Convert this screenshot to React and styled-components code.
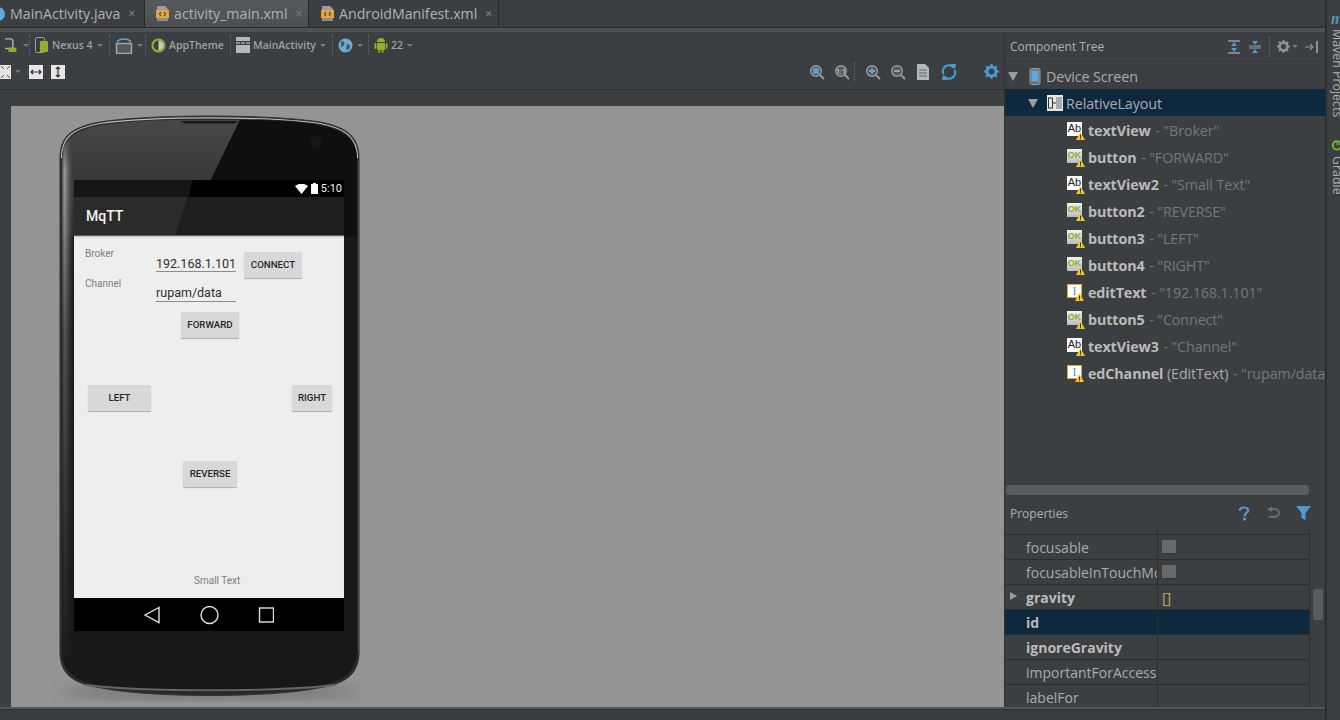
import React from 'react';
import styled, { createGlobalStyle } from 'styled-components';

const Global = createGlobalStyle`
  html, body { margin: 0; padding: 0; background: #3c3f41; }
  * { box-sizing: border-box; }
`;

const ui = `"Open Sans", "Noto Sans", "Liberation Sans", sans-serif`;

const Root = styled.div`
  width: 1340px; height: 720px; overflow: hidden; display: flex;
  background: #3c3f41; font-family: ${ui}; color: #bbbbbb;
`;
const Workspace = styled.div`
  width: 1325px; height: 720px; display: flex; flex-direction: column;
`;
const TabBar = styled.div`
  height: 28px; flex: none; display: flex; background: #3c3f41; border-bottom: 1px solid #2b2d2e;
`;
const Tab = styled.div`
  height: 27px; display: flex; align-items: center; width: ${p => p.$w}px;
  padding-left: ${p => p.$pad}px; gap: 4px; font-size: 14.2px;
  background: ${p => p.$active ? 'linear-gradient(#565a5c, #4b4f51)' : '#3c3f41'};
  border-right: 1px solid #26282a; color: #afb1b3;
  white-space: nowrap;
`;
const TabClose = styled.span`
  margin-left: 4px; font-size: 12px; color: #6f7274; font-weight: 700; line-height: 1;
`;
const Strip = styled.div`
  height: 4px; flex: none; background: #4e5254;
`;
const Panes = styled.div`
  height: 675px; flex: none; display: flex;
`;
const Designer = styled.div`
  width: 1004px; flex: none; display: flex; flex-direction: column;
`;
const Tools = styled.div`
  height: 26px; flex: none; display: flex; align-items: center; color: #9ea2a4; font-size: 10.5px;
  font-weight: 600;
`;
const ToolsBottom = styled(Tools)`
  height: 32px; padding-bottom: 4px; border-bottom: 1px solid #2f3133;
  justify-content: space-between;
`;
const Group = styled.div`
  width: ${p => p.$w}px; height: 20px; flex: none; display: flex; align-items: center; gap: 3px;
  padding-left: ${p => p.$pad || 5}px;
  border-right: 1px dotted ${p => p.$sep === false ? 'transparent' : '#6a6d6f'};
`;
const IconRow = styled.div`
  display: flex; align-items: center; gap: ${p => p.$gap || 0}px; padding-right: ${p => p.$end || 0}px;
`;
const Space = styled.span`
  width: ${p => p.$w}px; flex: none;
`;
const Divider = styled.span`
  width: 1px; height: 20px; border-left: 1px dotted #6a6d6f;
`;
const Caret = styled.span`
  width: 0; height: 0; border-left: 3px solid transparent; border-right: 3px solid transparent;
  border-top: 3px solid #777a7c; margin-left: ${p => p.$m || 1}px;
`;
const Gutter = styled.div`
  height: 16px; flex: none;
`;
const Canvas = styled.div`
  height: 601px; flex: none; margin-left: 11px; background: #949494; overflow: hidden; padding: 2px 0 0 39px;
`;
const Phone = styled.div`
  position: relative; width: 320px; height: 598px; padding: 72px 0 0 24px;
`;
const PhoneArt = styled.svg`
  position: absolute; left: 0; top: 0;
`;
const Screen = styled.div`
  position: relative; width: 270px; height: 451px; display: flex; flex-direction: column;
`;
const StatusBar = styled.div`
  height: 17px; flex: none; display: flex; align-items: center; justify-content: flex-end; gap: 3px;
  padding-right: 2px; color: #f2f2f2; font: 11px Roboto, sans-serif;
  background: linear-gradient(100deg, rgba(14,14,14,.82) 0 43%, #000 43.5%);
`;
const ActionBar = styled.div`
  height: 39px; flex: none; display: flex; align-items: center; padding-left: 12px;
  color: #f4f4f4; font: 500 14px Roboto, sans-serif;
  background: linear-gradient(108deg, #2b2b2b 0 40%, #1e1e1e 40.3%);
  border-bottom: 1px solid #5f5f5f;
`;
const Content = styled.div`
  position: relative; height: 362px; flex: none; background: #eeeeee;
  box-shadow: inset 0 2px 2px -1px rgba(0,0,0,.2);
`;
/* The widgets below are placed as in the Android RelativeLayout preview: a free canvas. */
const Label = styled.span`
  position: absolute; left: ${p => p.$x}px; top: ${p => p.$y}px; font: 10px Roboto, sans-serif; color: #7f7f7f;
`;
const Field = styled.div`
  position: absolute; left: ${p => p.$x}px; top: ${p => p.$y}px; width: 80px; height: 20px;
  font: 12.5px/${p => p.$lh}px Roboto, sans-serif; color: #2e2e2e; border-bottom: 1px solid #8c8c8c; white-space: nowrap;
`;
const DroidButton = styled.div`
  position: absolute; left: ${p => p.$x}px; top: ${p => p.$y}px; width: ${p => p.$w}px; height: 26px;
  display: flex; align-items: center; justify-content: center; padding-bottom: 2px;
  font: 500 9.7px Roboto, sans-serif; color: #262626; background: #d8d8d8; border-radius: 1px;
  box-shadow: 0 1px 1px rgba(0,0,0,.28);
`;
const NavBar = styled.div`
  height: 33px; flex: none; background: #000; display: flex; align-items: center;
  justify-content: center;
`;
const BottomBar = styled.div`
  flex: 1; border-top: 2px solid #55585a; background: #3a3d3f;
  box-shadow: inset 0 1px 0 #2c2e30;
`;
const RightPanel = styled.div`
  width: 321px; flex: none; display: flex; flex-direction: column; border-left: 1px solid #2f3133;
`;
const PanelHead = styled.div`
  height: 30px; flex: none; display: flex; align-items: center; justify-content: space-between;
  padding: 0 6px 0 5px; font-size: 12px; color: #aeb0b2; border-bottom: 1px solid #35383a;
`;
const TreeList = styled.div`
  height: 423px; flex: none; overflow: hidden;
`;
const TreeRow = styled.div`
  height: 27px; padding-top: 1px; display: flex; align-items: center; white-space: nowrap; overflow: hidden;
  padding-left: ${p => p.$indent}px; gap: ${p => p.$gap || 5}px; font-size: 14.3px; letter-spacing: -.1px;
  background: ${p => p.$sel ? '#0d293e' : 'transparent'}; color: #a9abad;
`;
const TreeCaption = styled.span`
  margin-left: ${p => p.$m}px;
`;
const Bold = styled.b`
  color: #bbbbbb; font-weight: 700;
`;
const Muted = styled.span`
  color: #757779; margin-left: 1px;
`;
const Arrow = styled.span`
  width: 0; height: 0; border-left: 5px solid transparent; border-right: 5px solid transparent;
  border-top: 9px solid #9a9c9e;
`;
const HScroll = styled.div`
  height: 10px; flex: none; margin: 0 16px 0 1px; background: #5a5d5f; border-radius: 3px;
`;
const PropHead = styled(PanelHead)`
  height: 33px; border: none; padding: 1px 14px 0 5px; margin-top: 1px;
`;
const PropArea = styled.div`
  position: relative; flex: 1; display: flex; overflow: hidden;
`;
const PropTable = styled.div`
  width: 305px; flex: none; padding-top: 5px;
  display: grid; grid-template-columns: 152px 1fr; grid-auto-rows: 25px; border-right: 1px solid #2b2d2e;
  background: linear-gradient(to right, transparent 152px, #2b2d2e 152px, #2b2d2e 153px, transparent 153px);
`;
const PropName = styled.div`
  display: flex; align-items: center; position: relative; padding-left: 21px; overflow: hidden; white-space: nowrap;
  font-size: 14px; font-weight: ${p => p.$bold ? 700 : 400}; color: ${p => p.$bold ? '#bbbbbb' : '#a9abad'};
  border-top: 1px solid #2b2d2e; background: ${p => p.$sel ? '#0d293e' : 'transparent'};
`;
const PropValue = styled.div`
  display: flex; align-items: center; padding-left: 4px; font-size: 14px; color: #c9a66b;
  border-top: 1px solid #2b2d2e; background: ${p => p.$sel ? '#0d293e' : 'transparent'};
  margin-left: 1px;
`;
const Check = styled.span`
  width: 14px; height: 14px; background: #666869; border-radius: 1px; border-bottom: 1px solid #333;
`;
const PropArrow = styled.span`
  position: absolute; left: 5px; top: 7px; width: 0; height: 0;
  border-top: 4px solid transparent; border-bottom: 4px solid transparent; border-left: 7px solid #9a9c9e;
`;
const VScrollTrack = styled.div`
  flex: 1; padding: 60px 2px 0 3px;
`;
const VThumb = styled.div`
  height: 31px; background: #5a5d5f; border-radius: 3px;
`;
const SideStrip = styled.div`
  width: 15px; height: 720px; flex: none; border-left: 2px solid #2b2d2e; display: flex; flex-direction: column;
  align-items: flex-start; padding: 11px 0 0 4px; overflow: hidden; background: #3c3f41;
`;
const SideM = styled.span`
  color: #5b93b8; font: italic 700 16px/15px "Liberation Serif", serif; margin-bottom: 3px;
`;
const SideText = styled.span`
  writing-mode: vertical-rl; font-size: 12.4px; line-height: 12px; color: #aeb0b2; white-space: nowrap;
`;
const GradleMark = styled.svg`
  margin: 21px 0 5px;
`;
const Tile = styled.span`
  position: relative; width: 15px; height: 14px; flex: none; display: inline-flex; align-items: center; justify-content: center;
  font: ${p => p.$kind === 'ok' ? 700 : 400} ${p => p.$kind === 'ok' ? 9 : 11}px/1 "Liberation Sans", sans-serif;
  color: ${p => p.$kind === 'ok' ? '#8fae1b' : '#222'};
  background: ${p => p.$kind === 'ok' ? 'linear-gradient(#f2f2f2, #bdbdbd)' : '#fff'};
  border: ${p => p.$kind === 'edit' ? '1.5px solid #e8a33d' : 'none'};
  margin-top: -3px;
`;
const Warn = styled.svg`
  position: absolute; right: -3px; bottom: -4px;
`;
const Ibeam = styled.span`
  color: #4f9fd6; font: 400 12px/1 "Liberation Serif", serif;
`;

const Warning = () => (
  <Warn width="9" height="8" viewBox="0 0 9 8"><path d="M4.500 0 9 8H0z" fill="#f2c81e" /><rect x="4" y="2.600" width="1" height="3" fill="#222" /><rect x="4" y="6.200" width="1" height="1" fill="#222" /></Warn>
);

const XmlIcon = () => (
  <svg width="14" height="16" viewBox="0 0 14 16">
    <path d="M1 0h8l3 3v1H1z" fill="#9b9d9f" /><path d="M1 12h11v3H1z" fill="#8d8f91" />
    <rect x="0" y="4" width="13" height="8" fill="#eba33c" />
    <path d="M5 6 3.500 8 5 10M8 6l1.500 2L8 10" stroke="#3c3f41" strokeWidth="1.100" fill="none" />
  </svg>
);

const Gear = ({ c = '#8f9294', s = 14 }) => (
  <svg width={s} height={s} viewBox="0 0 14 14">
    <circle cx="7" cy="7" r="4.200" fill="none" stroke={c} strokeWidth="2.800" />
    <path d="M7 0v3M7 11v3M0 7h3M11 7h3M2 2l2 2M10 10l2 2M12 2l-2 2M4 10l-2 2" stroke={c} strokeWidth="2" />
  </svg>
);

const Zoom = ({ children }) => (
  <svg width="16" height="16" viewBox="0 0 16 16">
    <circle cx="7" cy="7" r="5.300" fill="#55585a" stroke="#9a9c9e" strokeWidth="1.400" />
    <path d="m11 11 4 4" stroke="#9a9c9e" strokeWidth="1.800" />
    {children}
  </svg>
);

const Droid = ({ s = 14 }) => (
  <svg width={s} height={s + 2} viewBox="0 0 14 16" fill="#8fb02a">
    <path d="M3 5a4 4 0 0 1 8 0z" /><rect x="3" y="6" width="8" height="7" rx="1" />
    <rect x="0.500" y="6" width="1.800" height="6" rx=".9" /><rect x="11.700" y="6" width="1.800" height="6" rx=".9" />
    <rect x="4.400" y="12" width="1.800" height="4" rx=".9" /><rect x="7.800" y="12" width="1.800" height="4" rx=".9" />
  </svg>
);

const bodyPath = 'M62 160C62 139 74 130 102 125 150 119 270 119 318 125 345 130 357 140 357 160V650C357 672 344 682 316 686 270 694 150 694 104 686 75 682 62 672 62 650Z';

const PhoneDrawing = () => (
  <PhoneArt width="320" height="598" viewBox="50 108 320 598">
    <defs>
      <linearGradient id="glass" gradientUnits="userSpaceOnUse" x1="0" y1="122" x2="0" y2="237"><stop offset="0" stopColor="#474747" /><stop offset="1" stopColor="#2b2b2b" /></linearGradient>
      <linearGradient id="bandL" gradientUnits="userSpaceOnUse" x1="61" y1="0" x2="75" y2="0"><stop offset="0" stopColor="#333" /><stop offset=".25" stopColor="#999" /><stop offset=".5" stopColor="#666" /><stop offset="1" stopColor="#333" stopOpacity="0" /></linearGradient>
      <linearGradient id="fade" gradientUnits="userSpaceOnUse" x1="0" y1="130" x2="0" y2="640"><stop offset="0" stopColor="#000" /><stop offset=".08" stopColor="#fff" /><stop offset=".4" stopColor="#777" /><stop offset="1" stopColor="#111" /></linearGradient>
      <mask id="bandMask"><rect x="50" y="108" width="320" height="598" fill="url(#fade)" /></mask>
      <clipPath id="bodyClip"><path d={bodyPath} /></clipPath>
      <filter id="blur"><feGaussianBlur stdDeviation="6" /></filter>
    </defs>
    <ellipse cx="210" cy="692" rx="150" ry="8" fill="#555" opacity=".4" filter="url(#blur)" />
    <path d="M60 158C60 136 72 127 100 122 150 114 270 114 320 122 347 127 359 137 359 158V652C359 674 346 684 318 688 270 698 150 698 102 688 73 684 60 674 60 652Z" fill="#2a2a2a" stroke="#333" />
    <path d="M61.500 158C61.500 137 73 128.500 100 123.500 150 116 270 116 320 123.500 346 128.500 357.500 138 357.500 158" fill="none" stroke="#bdbdbd" strokeWidth="1.200" />
    <path d={bodyPath} fill="#181818" />
    <path d="M62 160C62 139 74 130 102 125 130 121 160 120 186 120L240 120 183 237H62Z" fill="url(#glass)" />
    <path d="M240 120C270 120 296 121 318 125 345 130 357 140 357 160V237H183Z" fill="#0f0f0f" />
    <path d="M180 121h58l-3 2.500h-50z" fill="#171717" />
    <circle cx="316" cy="142" r="6" fill="#16161e" />
    <g clipPath="url(#bodyClip)">
      <rect x="61" y="130" width="14" height="525" fill="url(#bandL)" mask="url(#bandMask)" />
    </g>
    <path d="M359 160V650" stroke="#555" strokeWidth="1.500" />
    <path d="M85 685c60 7 190 7 250 0" stroke="#666" strokeWidth="1.800" fill="none" />
  </PhoneArt>
);

const tree = [
  ['ab', 'textView', '"Broker"'],
  ['ok', 'button', '"FORWARD"'],
  ['ab', 'textView2', '"Small Text"'],
  ['ok', 'button2', '"REVERSE"'],
  ['ok', 'button3', '"LEFT"'],
  ['ok', 'button4', '"RIGHT"'],
  ['edit', 'editText', '"192.168.1.101"'],
  ['ok', 'button5', '"Connect"'],
  ['ab', 'textView3', '"Channel"'],
  ['edit', 'edChannel', '"rupam/data"', '(EditText)'],
];

const props = [
  { n: 'focusable', check: true },
  { n: 'focusableInTouchMode', check: true },
  { n: 'gravity', bold: true, v: '[]', arrow: true },
  { n: 'id', bold: true, sel: true },
  { n: 'ignoreGravity', bold: true },
  { n: 'importantForAccessibility' },
  { n: 'labelFor' },
];

export default function App() {
  return (
    <Root>
      <Global />
      <Workspace>
        <TabBar>
          <Tab $w={145} $pad={0}>
            <svg width="6" height="16" viewBox="0 0 6 16"><circle cx="-2" cy="8" r="7" fill="#62a8d8" /></svg>
            MainActivity.java<TabClose>×</TabClose>
          </Tab>
          <Tab $w={164} $pad={11} $active>
            <XmlIcon />activity_main.xml<TabClose>×</TabClose>
          </Tab>
          <Tab $w={190} $pad={12}>
            <XmlIcon />AndroidManifest.xml<TabClose>×</TabClose>
          </Tab>
        </TabBar>
        <Strip />
        <Panes>
          <Designer>
            <Tools>
              <Group $w={30} $pad={0}>
                <svg width="16" height="18" viewBox="0 0 16 18"><path d="M0 2h7l2 2v9H0" fill="none" stroke="#b5b7b9" strokeWidth="1.600" /><path d="M4 12h9v5H4z" fill="#8fb02a" /></svg>
                <Caret />
              </Group>
              <Group $w={80}>
                <svg width="14" height="16" viewBox="0 0 14 16"><rect x="0.500" y="0.500" width="9" height="15" rx="1" fill="none" stroke="#9a9c9e" /><rect x="5" y="4" width="8" height="11" fill="#8fb02a" /></svg>
                Nexus 4<Caret />
              </Group>
              <Group $w={36}>
                <svg width="18" height="17" viewBox="0 0 18 17"><path d="M2 5C5 1 13 1 16 5" fill="none" stroke="#6aa2c8" strokeWidth="1.500" /><rect x="1.500" y="6.500" width="15" height="10" fill="#55585a" stroke="#a5a7a9" strokeWidth="1.400" /></svg>
                <Caret />
              </Group>
              <Group $w={85}>
                <svg width="15" height="15" viewBox="0 0 15 15"><circle cx="7.500" cy="7.500" r="6" fill="#3c3f41" stroke="#96ac30" strokeWidth="2.200" /><path d="M7.500 2.500a5 5 0 0 1 0 10z" fill="#c7c9cb" /></svg>
                AppTheme
              </Group>
              <Group $w={102}>
                <svg width="14" height="16" viewBox="0 0 14 16"><rect width="14" height="4" fill="#b5b7b9" /><rect y="5" width="4" height="2" fill="#8a8c8e" /><rect x="5" y="5" width="4" height="2" fill="#8a8c8e" /><rect x="10" y="5" width="4" height="2" fill="#8a8c8e" /><rect y="8" width="14" height="8" fill="#b5b7b9" /></svg>
                MainActivity<Caret />
              </Group>
              <Group $w={36}>
                <svg width="15" height="15" viewBox="0 0 15 15"><circle cx="7.500" cy="7.500" r="7" fill="#6fa8d0" /><path d="M3 3c3 0 4 2 3 4s-3 1-3 3M9 6c2 0 3 1 3 3s-2 3-3 3-1-3 0-6" fill="#3c5a70" /></svg>
                <Caret />
              </Group>
              <Group $w={60} $sep={false}>
                <Droid />22<Caret />
              </Group>
            </Tools>
            <ToolsBottom>
              <IconRow>
                <svg width="11" height="14" viewBox="0 0 11 14"><rect width="11" height="14" fill="#e5e5e5" /><path d="M1 1l3 3M10 1 7 4M1 13l3-3M10 13l-3-3" stroke="#555" strokeWidth="1" /></svg>
                <Space $w={3} />
                <Caret />
                <Space $w={8} />
                <svg width="14" height="14" viewBox="0 0 14 14"><rect width="14" height="14" fill="#e5e5e5" /><path d="M2 7h10M4 5 2 7l2 2M10 5l2 2-2 2" stroke="#333" strokeWidth="1.200" fill="none" /></svg>
                <Space $w={8} />
                <svg width="14" height="14" viewBox="0 0 14 14"><rect width="14" height="14" fill="#e5e5e5" /><path d="M7 2v10M5 4l2-2 2 2M5 10l2 2 2-2" stroke="#333" strokeWidth="1.200" fill="none" /></svg>
              </IconRow>
              <IconRow $end={5}>
                <Zoom><rect x="4" y="4" width="6" height="6" fill="#5c9ccc" /></Zoom>
                <Space $w={9} />
                <Zoom><text x="7" y="9.500" fontSize="6.500" fontWeight="700" textAnchor="middle" fill="#bbb">1:1</text></Zoom>
                <Space $w={4} />
                <Divider />
                <Space $w={10} />
                <Zoom><path d="M4 7h6M7 4v6" stroke="#62a8d8" strokeWidth="1.800" /></Zoom>
                <Space $w={9} />
                <Zoom><path d="M4 7h6" stroke="#aaa" strokeWidth="1.800" /></Zoom>
                <Space $w={11} />
                <svg width="12" height="16" viewBox="0 0 12 16"><path d="M0 0h8l4 4v12H0z" fill="#b5b7b9" /><path d="M2 6h8M2 9h8M2 12h8" stroke="#4b6d85" strokeWidth="1.200" /></svg>
                <Space $w={12} />
                <svg width="16" height="16" viewBox="0 0 16 16"><path d="M12.500 3.500A6 6 0 0 0 2.500 10" fill="none" stroke="#4d9bd0" strokeWidth="2.200" /><path d="M3.500 12.500a6 6 0 0 0 10-6.500" fill="none" stroke="#4d9bd0" strokeWidth="2.200" /><path d="M9.500 0l5.500 0-1 5.500zM6.500 16 1 16l1-5.500z" fill="#4d9bd0" /></svg>
                <Space $w={27} />
                <Gear c="#4d9bd0" s={15} />
              </IconRow>
            </ToolsBottom>
            <Gutter />
            <Canvas>
              <Phone>
                <PhoneDrawing />
                <Screen>
                  <StatusBar>
                    <svg width="13" height="10" viewBox="0 0 13 10"><path d="M0 2C4-1 9-1 13 2L6.500 10z" fill="#fff" /></svg>
                    <svg width="7" height="11" viewBox="0 0 7 11"><path d="M2 0h3v1h2v10H0V1h2z" fill="#fff" /></svg>
                    5:10
                  </StatusBar>
                  <ActionBar>MqTT</ActionBar>
                  <Content>
                    <Label $x={11} $y={12}>Broker</Label>
                    <Label $x={11} $y={42}>Channel</Label>
                    <Field $x={82} $y={16} $lh={23}>192.168.1.101</Field>
                    <Field $x={82} $y={46} $lh={22}>rupam/data</Field>
                    <DroidButton $x={170} $y={16} $w={58}>CONNECT</DroidButton>
                    <DroidButton $x={107} $y={76} $w={58}>FORWARD</DroidButton>
                    <DroidButton $x={14} $y={149} $w={63}>LEFT</DroidButton>
                    <DroidButton $x={218} $y={149} $w={40}>RIGHT</DroidButton>
                    <DroidButton $x={109} $y={225} $w={54}>REVERSE</DroidButton>
                    <Label $x={120} $y={339}>Small Text</Label>
                  </Content>
                  <NavBar>
                    <svg width="130" height="20" viewBox="0 0 130 20" fill="none" stroke="#e0e0e0" strokeWidth="1.400">
                      <path d="M15 2.500 1 10 15 17.500z" />
                      <circle cx="65.500" cy="10" r="8.500" />
                      <rect x="115.500" y="3" width="14" height="14" />
                    </svg>
                  </NavBar>
                </Screen>
              </Phone>
            </Canvas>
          </Designer>
          <RightPanel>
            <PanelHead>
              Component Tree
              <IconRow $gap={7}>
                <svg width="14" height="14" viewBox="0 0 14 14"><path d="M1 1h12M1 13h12" stroke="#9a9c9e" strokeWidth="1.400" /><path d="M7 2 4 6h6zM7 12 4 8h6z" fill="#4d9bd0" /></svg>
                <svg width="14" height="14" viewBox="0 0 14 14"><path d="M1 6h12M1 8h12" stroke="#9a9c9e" strokeWidth="1.200" /><path d="M7 5 4 1h6zM7 9l-3 4h6z" fill="#4d9bd0" /></svg>
                <Divider />
                <Gear s={13} /><Caret $m={-5} />
                <svg width="14" height="12" viewBox="0 0 14 12"><path d="M0 6h8M5 3l3 3-3 3" stroke="#8f9294" strokeWidth="1.200" fill="none" /><rect x="11" y="0" width="2" height="12" fill="#8f9294" /></svg>
              </IconRow>
            </PanelHead>
            <TreeList>
              <TreeRow $indent={3} $gap={11}>
                <Arrow />
                <svg width="13" height="17" viewBox="0 0 13 17"><rect x="1" y="0.500" width="10" height="16" rx="1.500" fill="#6a6d6f" stroke="#9a9c9e" /><rect x="2.500" y="2.500" width="7" height="11" fill="#62a8d8" /></svg>
                <TreeCaption $m={-7}>Device Screen</TreeCaption>
              </TreeRow>
              <TreeRow $indent={23} $gap={9} $sel>
                <Arrow />
                <svg width="16" height="16" viewBox="0 0 16 16"><rect width="16" height="16" fill="#e8e8e8" /><rect x="1.500" y="3" width="4" height="10" fill="none" stroke="#333" /><rect x="9" y="2" width="6" height="12" fill="#aaa" /><path d="M5 8h4" stroke="#333" /></svg>
                <TreeCaption $m={-6}>RelativeLayout</TreeCaption>
              </TreeRow>
              {tree.map(([k, name, val, extra]) => (
                <TreeRow $indent={62} $gap={6} key={name}>
                  <Tile $kind={k}>
                    {k === 'ab' ? 'Ab' : k === 'ok' ? 'OK' : <Ibeam>I</Ibeam>}
                    <Warning />
                  </Tile>
                  <span><Bold>{name}</Bold>{extra ? <> {extra}</> : null} <Muted>- {val}</Muted></span>
                </TreeRow>
              ))}
            </TreeList>
            <HScroll />
            <PropHead>
              Properties
              <IconRow $gap={16}>
                <svg width="12" height="15" viewBox="0 0 13 15"><path d="M2 4.500C2 2 4 1 6.500 1S11 2 11 4.500C11 7 7 7 7 10.500" fill="none" stroke="#4d9bd0" strokeWidth="2.400" /><rect x="5.500" y="12" width="3" height="3" fill="#4d9bd0" /></svg>
                <svg width="14" height="14" viewBox="0 0 15 14"><path d="M5 3H10a4 4 0 0 1 0 8H3" fill="none" stroke="#6d7072" strokeWidth="2" /><path d="M6 0 1 3l5 3z" fill="#6d7072" /></svg>
                <svg width="15" height="14" viewBox="0 0 15 14"><path d="M0 0h15L9.500 7v7L5.500 12V7z" fill="#4d9bd0" /></svg>
              </IconRow>
            </PropHead>
            <PropArea>
              <PropTable>
                {props.map(p => (
                  <React.Fragment key={p.n}>
                    <PropName $bold={p.bold} $sel={p.sel}>{p.arrow && <PropArrow />}{p.n}</PropName>
                    <PropValue $sel={p.sel}>{p.check ? <Check /> : p.v}</PropValue>
                  </React.Fragment>
                ))}
              </PropTable>
              <VScrollTrack><VThumb /></VScrollTrack>
            </PropArea>
          </RightPanel>
        </Panes>
        <BottomBar />
      </Workspace>
      <SideStrip>
        <SideM>m</SideM>
        <SideText>Maven Projects</SideText>
        <GradleMark width="12" height="13" viewBox="0 0 12 14"><circle cx="6" cy="8" r="4.500" fill="none" stroke="#8fb02a" strokeWidth="2" /><circle cx="7" cy="6" r="2" fill="#3f9c55" /></GradleMark>
        <SideText>Gradle</SideText>
      </SideStrip>
    </Root>
  );
}
